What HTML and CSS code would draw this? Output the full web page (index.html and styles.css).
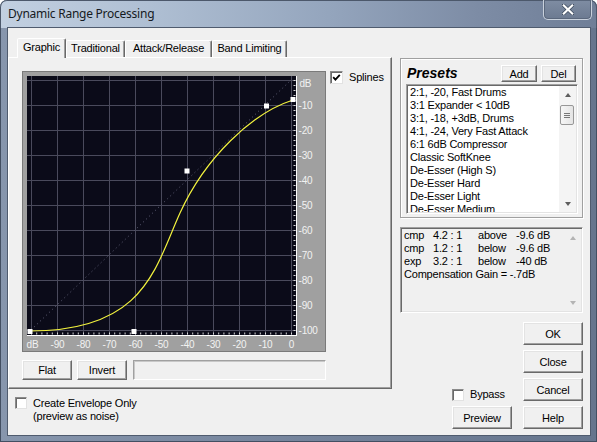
FILE: index.html
```html
<!DOCTYPE html>
<html>
<head>
<meta charset="utf-8">
<title>Dynamic Range Processing</title>
<link rel="stylesheet" href="styles.css">
</head>
<body>
<div class="window">
  <div class="titlebar">
    <span class="title">Dynamic Range Processing</span>
    <div class="close">
      <svg width="12" height="11" viewBox="0 0 12 11"><path d="M1.5 1.2L10.5 9.8M10.5 1.2L1.5 9.8" stroke="#3d4a5e" stroke-width="3.6" stroke-linecap="square"/><path d="M1.8 1.5L10.2 9.5M10.2 1.5L1.8 9.5" stroke="#ffffff" stroke-width="2.2" stroke-linecap="square"/></svg>
    </div>
  </div>
  <div class="client">
    <div class="left">
      <div class="tabs">
        <div class="tab sel w-graphic">Graphic</div>
        <div class="tab w-trad">Traditional</div>
        <div class="tab w-attack">Attack/Release</div>
        <div class="tab w-band">Band Limiting</div>
      </div>
      <div class="panel">
        <div class="graph-row">
          <div class="graph">
            <svg width="302" height="279" viewBox="23 72 302 279" font-family="Liberation Sans, Arial, sans-serif" font-size="10">
              <rect x="27" y="76" width="269" height="259" fill="#0b0b19"/>
              <path d="M31.5 76V335M57.5 76V335M83.5 76V335M109.5 76V335M135.5 76V335M161.5 76V335M187.5 76V335M213.5 76V335M239.5 76V335M265.5 76V335M291.5 76V335M27 80.5H296M27 105.5H296M27 130.5H296M27 155.5H296M27 180.5H296M27 205.5H296M27 230.5H296M27 255.5H296M27 280.5H296M27 305.5H296M27 330.5H296" stroke="#4a4a5c" stroke-width="1" fill="none"/>
              <line x1="31" y1="330" x2="291" y2="80" stroke="#56566c" stroke-width="1" stroke-dasharray="1.2 3"/>
              <line x1="31" y1="333.5" x2="293" y2="333.5" stroke="#d8d8d8" stroke-width="2" stroke-dasharray="1 4.2"/>
              <line x1="294.5" y1="80" x2="294.5" y2="332" stroke="#d8d8d8" stroke-width="2" stroke-dasharray="1 4"/>
              <path d="M27 335.5H297M296.5 76V336" stroke="#ffffff" stroke-width="1" fill="none"/>
              <path d="M30 331C145 331 155 268 180 213C205 158 252 113 293 100" stroke="#f2f23e" stroke-width="1.2" fill="none"/>
              <g fill="#ffffff">
                <rect x="27.5" y="329" width="5" height="5"/>
                <rect x="131.5" y="329" width="5" height="5"/>
                <rect x="184.5" y="168.5" width="5" height="5"/>
                <rect x="264" y="103.5" width="5" height="5"/>
                <rect x="290.5" y="97" width="5" height="5"/>
              </g>
              <g fill="#f2f2f2">
                <text x="299.5" y="86.6">dB</text>
                <text x="298.5" y="108.6">-10</text>
                <text x="298.5" y="133.6">-20</text>
                <text x="298.5" y="158.6">-30</text>
                <text x="298.5" y="183.6">-40</text>
                <text x="298.5" y="208.6">-50</text>
                <text x="298.5" y="233.6">-60</text>
                <text x="298.5" y="258.6">-70</text>
                <text x="298.5" y="283.6">-80</text>
                <text x="298.5" y="308.6">-90</text>
                <text x="298.5" y="333.6">-100</text>
              </g>
              <g fill="#f2f2f2" text-anchor="middle">
                <text x="32.5" y="348">dB</text>
                <text x="57.5" y="348">-90</text>
                <text x="83.5" y="348">-80</text>
                <text x="109.5" y="348">-70</text>
                <text x="135.5" y="348">-60</text>
                <text x="161.5" y="348">-50</text>
                <text x="187.5" y="348">-40</text>
                <text x="213.5" y="348">-30</text>
                <text x="239.5" y="348">-20</text>
                <text x="265.5" y="348">-10</text>
                <text x="291.5" y="348">0</text>
              </g>
            </svg>
          </div>
          <div class="check splines">
            <span class="box"><svg width="11" height="11" viewBox="0 0 11 11"><path d="M2.2 5.2L4.4 7.6L8.8 2.8" stroke="#000" stroke-width="1.8" fill="none"/></svg></span>
            <span>Splines</span>
          </div>
        </div>
        <div class="btn-row">
          <div class="btn w50">Flat</div>
          <div class="btn w50">Invert</div>
          <div class="field"></div>
        </div>
      </div>
      <div class="envelope">
        <span class="box"></span>
        <span class="env-label">Create Envelope Only<br>(preview as noise)</span>
      </div>
    </div>

    <div class="right">
      <div class="presets">
        <div class="presets-head">
          <span class="presets-title">Presets</span>
          <div class="btn small add">Add</div>
          <div class="btn small del">Del</div>
        </div>
        <div class="listbox">
          <ul class="items">
            <li>2:1, -20, Fast Drums</li>
            <li>3:1 Expander &lt; 10dB</li>
            <li>3:1, -18, +3dB, Drums</li>
            <li>4:1, -24, Very Fast Attack</li>
            <li>6:1 6dB Compressor</li>
            <li>Classic SoftKnee</li>
            <li>De-Esser (High S)</li>
            <li>De-Esser Hard</li>
            <li>De-Esser Light</li>
            <li>De-Esser Medium</li>
          </ul>
          <div class="vscroll">
            <div class="arrow-box"><span class="arr up"></span></div>
            <div class="track"><div class="thumb"><span></span><span></span><span></span></div></div>
            <div class="arrow-box"><span class="arr down"></span></div>
          </div>
        </div>
      </div>

      <div class="info">
        <div class="info-grid">
          <span>cmp</span><span>4.2 : 1</span><span>above</span><span>-9.6 dB</span>
          <span>cmp</span><span>1.2 : 1</span><span>below</span><span>-9.6 dB</span>
          <span>exp</span><span>3.2 : 1</span><span>below</span><span>-40 dB</span>
          <span class="full">Compensation Gain = -.7dB</span>
        </div>
        <div class="vscroll dis">
          <div class="arrow-box"><span class="arr up"></span></div>
          <div class="track"></div>
          <div class="arrow-box"><span class="arr down"></span></div>
        </div>
      </div>

      <div class="bottom">
        <div class="bp">
          <div class="check bypass"><span class="box"></span><span>Bypass</span></div>
          <div class="btn big">Preview</div>
        </div>
        <div class="btncol">
          <div class="btn big">OK</div>
          <div class="btn big">Close</div>
          <div class="btn big">Cancel</div>
          <div class="btn big">Help</div>
        </div>
      </div>
    </div>
  </div>
</div>
</body>
</html>
```

FILE: styles.css
```css
* { box-sizing: border-box; }

body {
  margin: 0;
  width: 597px;
  height: 442px;
  overflow: hidden;
  background: #ffffff;
  font-family: "Liberation Sans", Arial, sans-serif;
  font-size: 11px;
  letter-spacing: -0.2px;
  color: #000;
}

.window {
  width: 597px;
  height: 442px;
  display: flex;
  flex-direction: column;
  background: linear-gradient(to right, #8796ad, #75849c 50%, #66758d);
  border-radius: 7px 7px 0 0;
  box-shadow: inset 0 0 0 1px #434f62;
  overflow: hidden;
}

.titlebar {
  height: 28px;
  flex: none;
  display: flex;
  align-items: flex-start;
  padding-left: 8px;
  background: linear-gradient(to right, #c2d0e1 0%, #afbfd3 25%, #94a5bd 55%, #7d8ca5 80%, #6f7e97 100%);
  box-shadow: inset 0 1px 0 #4c586b, inset 1px 0 0 #4c586b, inset -1px 0 0 #4c586b;
  border-radius: 7px 7px 0 0;
}

.title {
  margin-top: 5px;
  font-family: "Noto Sans", "Open Sans", sans-serif;
  font-size: 12px;
  letter-spacing: -0.25px;
  line-height: 17px;
  color: #151a22;
}

.close {
  margin-left: auto;
  margin-right: 5px;
  width: 49px;
  height: 20px;
  border: 1px solid #c9d1dc;
  border-top: 0;
  border-radius: 0 0 5px 5px;
  background: linear-gradient(#7f8da3, #6c7a91);
  box-shadow: inset 0 0 0 1px #5a677c;
  display: flex;
  align-items: center;
  justify-content: center;
}
.close svg { display: block; }

.client {
  margin: 0 7px 7px 8px;
  height: 407px;
  flex: none;
  background: #f0f0f0;
  display: flex;
  box-shadow: 0 0 0 1px #4f5b6e;
}

/* ---------- left column ---------- */
.left {
  width: 384px;
  flex: none;
  padding-top: 10px;
  display: flex;
  flex-direction: column;
}

.tabs {
  display: flex;
  align-items: flex-end;
  height: 19px;
  padding-left: 9px;
  position: relative;
  z-index: 1;
}

.tab {
  flex: none;
  height: 17px;
  line-height: 15px;
  text-align: center;
  border: 1px solid;
  border-bottom: 0;
  border-color: #ffffff #696969 transparent #ffffff;
  box-shadow: inset -1px 0 0 #a0a0a0;
  background: #f0f0f0;
  border-radius: 2px 2px 0 0;
}
.tab.sel {
  height: 20px;
  margin-bottom: -1px;
  line-height: 16px;
  padding-bottom: 2px;
}
.w-graphic { width: 49px; }
.w-trad { width: 59px; }
.w-attack { width: 87px; }
.w-band { width: 75px; }

.panel {
  height: 332px;
  border: 1px solid;
  border-color: #ffffff #696969 #696969 #ffffff;
  box-shadow: inset -1px -1px 0 #a0a0a0;
  padding: 13px 0 0 13px;
}

.graph-row {
  display: flex;
  align-items: flex-start;
  gap: 4px;
}

.graph {
  width: 304px;
  height: 281px;
  flex: none;
  border: 1px solid #7a7a7a;
  background: #a0a0a0;
}
.graph svg { display: block; }

.check {
  display: flex;
  align-items: center;
  gap: 5px;
  line-height: 13px;
}

.box {
  width: 13px;
  height: 13px;
  flex: none;
  background: #ffffff;
  border: 1px solid;
  border-color: #8a8a8a #e2e2e2 #e2e2e2 #8a8a8a;
  box-shadow: inset 1px 1px 0 #6a6a6a;
  display: flex;
  align-items: center;
  justify-content: center;
}
.box svg { display: block; }

.splines { gap: 6px; }

.btn-row {
  display: flex;
  margin-top: 8px;
  gap: 5px;
  height: 20px;
}

.btn {
  flex: none;
  display: flex;
  align-items: center;
  justify-content: center;
  background: #f0f0f0;
  border: 1px solid;
  border-color: #ffffff #696969 #696969 #ffffff;
  box-shadow: inset -1px -1px 0 #a0a0a0, inset 1px 1px 0 #e3e3e3;
}
.w50 { width: 50px; height: 20px; }

.field {
  margin-left: 1px;
  width: 193px;
  height: 20px;
  border: 1px solid;
  border-color: #a0a0a0 #ffffff #ffffff #a0a0a0;
  box-shadow: inset 1px 1px 0 #c8c8c8;
  background: #f0f0f0;
}

.envelope {
  display: flex;
  align-items: flex-start;
  gap: 6px;
  margin: 8px 0 0 7px;
  line-height: 13px;
}
.envelope .box { width: 12px; height: 12px; }

/* ---------- right column ---------- */
.right {
  width: 183px;
  flex: none;
  margin-left: 8px;
  padding-top: 30px;
  display: flex;
  flex-direction: column;
}

.presets {
  height: 160px;
  border: 1px solid #a0a0a0;
  box-shadow: inset 1px 1px 0 #ffffff, 1px 1px 0 #ffffff;
  padding: 6px 5px 0 5px;
  display: flex;
  flex-direction: column;
}

.presets-head {
  display: flex;
  align-items: center;
  height: 17px;
  padding-left: 1px;
  padding-right: 1px;
}
.presets-title {
  font-size: 14px;
  font-weight: bold;
  font-style: italic;
  letter-spacing: 0;
  line-height: 17px;
}
.small { height: 17px; }
.add { width: 36px; margin-left: auto; }
.del { width: 35px; margin-left: 4px; }

.listbox {
  margin-top: 2px;
  height: 130px;
  width: 172px;
  background: #ffffff;
  border: 1px solid;
  border-color: #a0a0a0 #ffffff #ffffff #a0a0a0;
  box-shadow: inset 1px 1px 0 #696969, inset -1px -1px 0 #e3e3e3;
  padding: 1px 1px 1px 1px;
  display: flex;
  overflow: hidden;
}

.items {
  list-style: none;
  margin: 0;
  padding: 0 0 0 2px;
  flex: 1;
  line-height: 13px;
  overflow: hidden;
}
.items li { white-space: nowrap; }

.vscroll {
  width: 17px;
  flex: none;
  display: flex;
  flex-direction: column;
  background: #f4f4f4;
}
.arrow-box {
  height: 17px;
  flex: none;
  display: flex;
  align-items: center;
  justify-content: center;
}
.track {
  flex: 1;
  padding: 2px 2px 0 1px;
}
.thumb {
  height: 20px;
  border: 1px solid #979797;
  border-radius: 2px;
  background: linear-gradient(to right, #f6f6f6, #e4e4e4);
  display: flex;
  flex-direction: column;
  align-items: center;
  justify-content: center;
  gap: 1px;
}
.thumb span {
  display: block;
  width: 6px;
  height: 1px;
  background: #777777;
}
.arr {
  width: 0;
  height: 0;
  border-left: 3.5px solid transparent;
  border-right: 3.5px solid transparent;
}
.arr.up { border-bottom: 4px solid #5e5e5e; }
.arr.down { border-top: 4px solid #5e5e5e; }
.dis .arr.up { border-bottom-color: #b4b4b4; }
.dis .arr.down { border-top-color: #b4b4b4; }
.dis { background: #f0f0f0; }

.info {
  margin-top: 9px;
  height: 86px;
  border: 1px solid;
  border-color: #a0a0a0 #ffffff #ffffff #a0a0a0;
  box-shadow: inset 1px 1px 0 #696969, inset -1px -1px 0 #e3e3e3;
  background: #f0f0f0;
  padding: 1px 1px 1px 3px;
  display: flex;
}
.info-grid {
  flex: 1;
  display: grid;
  grid-template-columns: 29px 45px 38px auto;
  grid-auto-rows: 13px;
  line-height: 13px;
  align-content: start;
  white-space: nowrap;
}
.info-grid .full { grid-column: 1 / -1; }

.bottom {
  margin-top: 9px;
  display: flex;
  justify-content: flex-end;
  gap: 11px;
}
.bp {
  display: flex;
  flex-direction: column;
  justify-content: flex-end;
  gap: 5px;
}
.bypass { gap: 6px; }
.bypass .box { width: 12px; height: 12px; }
.btncol {
  display: flex;
  flex-direction: column;
  gap: 5px;
}
.big { width: 60px; height: 23px; }
```
